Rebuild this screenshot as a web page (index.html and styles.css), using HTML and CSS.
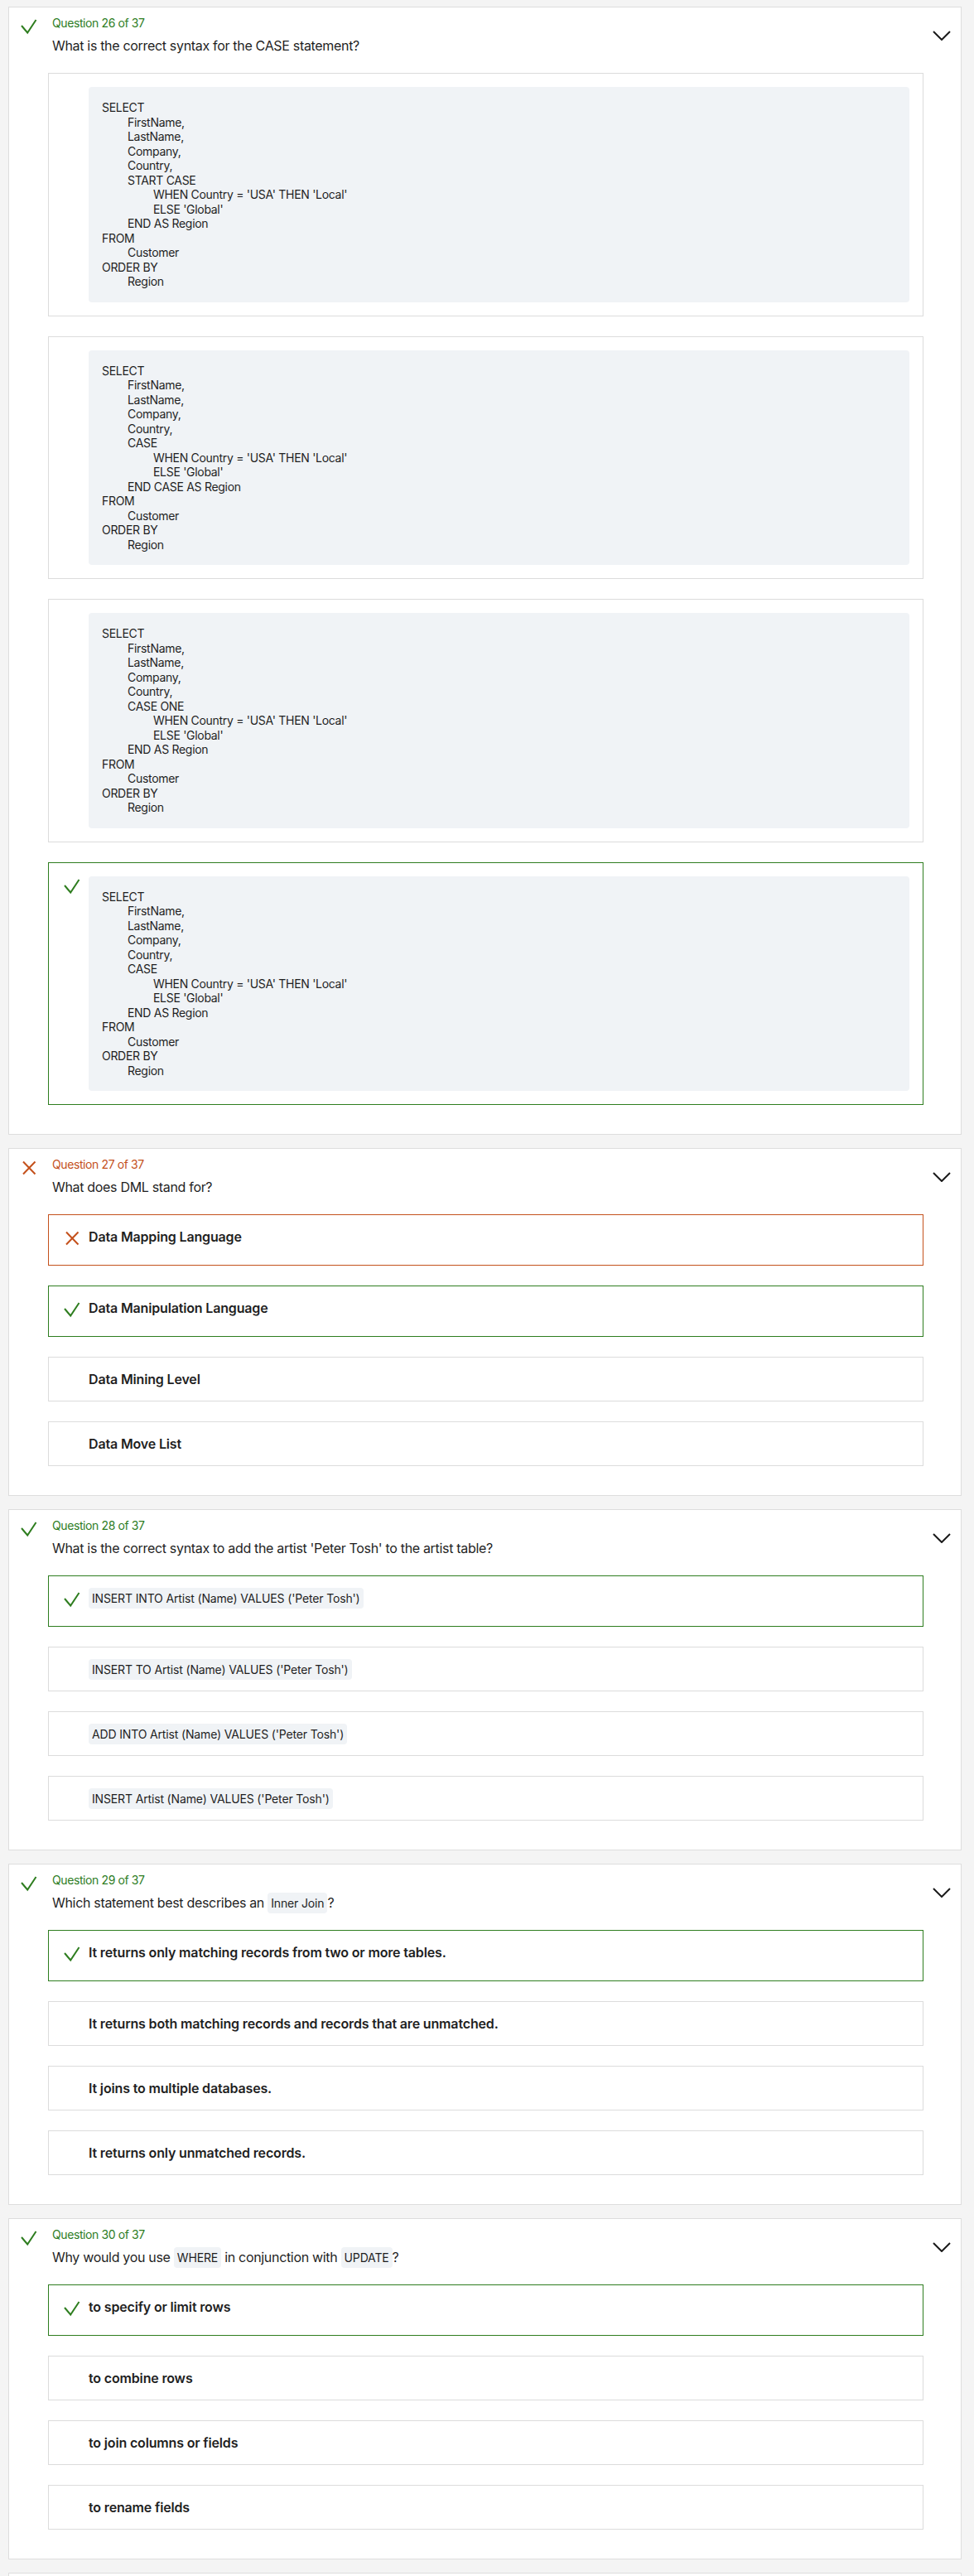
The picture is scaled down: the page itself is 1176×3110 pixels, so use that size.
FILE: index.html
```html
<!DOCTYPE html>
<html lang="en">
<head>
<meta charset="utf-8">
<title>Quiz review</title>
<link rel="stylesheet" href="styles.css">
</head>
<body>
<main class="page">

  <section class="card">
    <header class="card-head">
      <span class="status ok"><svg viewBox="0 0 24 24" width="24" height="24"><path d="M3 11 L10.2 19.5 L20.5 4" /></svg></span>
      <div class="head-text">
        <div class="label ok-text">Question 26 of 37</div>
        <div class="question">What is the correct syntax for the CASE statement?</div>
      </div>
      <span class="chev"><svg viewBox="0 0 22 12" width="22" height="12"><path d="M1 1 L11 11 L21 1" /></svg></span>
    </header>
    <div class="options">
      <div class="opt">
        <span class="opt-icon"></span>
<pre class="code">SELECT
	FirstName,
	LastName,
	Company,
	Country,
	START CASE
		WHEN Country = 'USA' THEN 'Local'
		ELSE 'Global'
	END AS Region
FROM
	Customer
ORDER BY
	Region</pre>
      </div>
      <div class="opt">
        <span class="opt-icon"></span>
<pre class="code">SELECT
	FirstName,
	LastName,
	Company,
	Country,
	CASE
		WHEN Country = 'USA' THEN 'Local'
		ELSE 'Global'
	END CASE AS Region
FROM
	Customer
ORDER BY
	Region</pre>
      </div>
      <div class="opt">
        <span class="opt-icon"></span>
<pre class="code">SELECT
	FirstName,
	LastName,
	Company,
	Country,
	CASE ONE
		WHEN Country = 'USA' THEN 'Local'
		ELSE 'Global'
	END AS Region
FROM
	Customer
ORDER BY
	Region</pre>
      </div>
      <div class="opt correct">
        <span class="opt-icon has-icon ok"><svg viewBox="0 0 24 24" width="24" height="24"><path d="M3 11 L10.2 19.5 L20.5 4" /></svg></span>
<pre class="code">SELECT
	FirstName,
	LastName,
	Company,
	Country,
	CASE
		WHEN Country = 'USA' THEN 'Local'
		ELSE 'Global'
	END AS Region
FROM
	Customer
ORDER BY
	Region</pre>
      </div>
    </div>
  </section>

  <section class="card">
    <header class="card-head">
      <span class="status bad"><svg viewBox="0 0 24 24" width="24" height="24"><path d="M5 4.5 L19.5 19.5 M19.5 4.5 L5 19.5" /></svg></span>
      <div class="head-text">
        <div class="label bad-text">Question 27 of 37</div>
        <div class="question">What does DML stand for?</div>
      </div>
      <span class="chev"><svg viewBox="0 0 22 12" width="22" height="12"><path d="M1 1 L11 11 L21 1" /></svg></span>
    </header>
    <div class="options">
      <div class="opt wrong">
        <span class="opt-icon has-icon bad"><svg viewBox="0 0 24 24" width="24" height="24"><path d="M5 4.5 L19.5 19.5 M19.5 4.5 L5 19.5" /></svg></span>
        <span class="opt-text">Data Mapping Language</span>
      </div>
      <div class="opt correct">
        <span class="opt-icon has-icon ok"><svg viewBox="0 0 24 24" width="24" height="24"><path d="M3 11 L10.2 19.5 L20.5 4" /></svg></span>
        <span class="opt-text">Data Manipulation Language</span>
      </div>
      <div class="opt">
        <span class="opt-icon"></span>
        <span class="opt-text">Data Mining Level</span>
      </div>
      <div class="opt">
        <span class="opt-icon"></span>
        <span class="opt-text">Data Move List</span>
      </div>
    </div>
  </section>

  <section class="card">
    <header class="card-head">
      <span class="status ok"><svg viewBox="0 0 24 24" width="24" height="24"><path d="M3 11 L10.2 19.5 L20.5 4" /></svg></span>
      <div class="head-text">
        <div class="label ok-text">Question 28 of 37</div>
        <div class="question">What is the correct syntax to add the artist 'Peter Tosh' to the artist table?</div>
      </div>
      <span class="chev"><svg viewBox="0 0 22 12" width="22" height="12"><path d="M1 1 L11 11 L21 1" /></svg></span>
    </header>
    <div class="options">
      <div class="opt correct">
        <span class="opt-icon has-icon ok"><svg viewBox="0 0 24 24" width="24" height="24"><path d="M3 11 L10.2 19.5 L20.5 4" /></svg></span>
        <span class="opt-text plain"><code class="inline">INSERT INTO Artist (Name) VALUES ('Peter Tosh')</code></span>
      </div>
      <div class="opt">
        <span class="opt-icon"></span>
        <span class="opt-text plain"><code class="inline">INSERT TO Artist (Name) VALUES ('Peter Tosh')</code></span>
      </div>
      <div class="opt">
        <span class="opt-icon"></span>
        <span class="opt-text plain"><code class="inline">ADD INTO Artist (Name) VALUES ('Peter Tosh')</code></span>
      </div>
      <div class="opt">
        <span class="opt-icon"></span>
        <span class="opt-text plain"><code class="inline">INSERT Artist (Name) VALUES ('Peter Tosh')</code></span>
      </div>
    </div>
  </section>

  <section class="card">
    <header class="card-head">
      <span class="status ok"><svg viewBox="0 0 24 24" width="24" height="24"><path d="M3 11 L10.2 19.5 L20.5 4" /></svg></span>
      <div class="head-text">
        <div class="label ok-text">Question 29 of 37</div>
        <div class="question">Which statement best describes an <code class="inline">Inner Join</code>?</div>
      </div>
      <span class="chev"><svg viewBox="0 0 22 12" width="22" height="12"><path d="M1 1 L11 11 L21 1" /></svg></span>
    </header>
    <div class="options">
      <div class="opt correct">
        <span class="opt-icon has-icon ok"><svg viewBox="0 0 24 24" width="24" height="24"><path d="M3 11 L10.2 19.5 L20.5 4" /></svg></span>
        <span class="opt-text">It returns only matching records from two or more tables.</span>
      </div>
      <div class="opt">
        <span class="opt-icon"></span>
        <span class="opt-text">It returns both matching records and records that are unmatched.</span>
      </div>
      <div class="opt">
        <span class="opt-icon"></span>
        <span class="opt-text">It joins to multiple databases.</span>
      </div>
      <div class="opt">
        <span class="opt-icon"></span>
        <span class="opt-text">It returns only unmatched records.</span>
      </div>
    </div>
  </section>

  <section class="card">
    <header class="card-head">
      <span class="status ok"><svg viewBox="0 0 24 24" width="24" height="24"><path d="M3 11 L10.2 19.5 L20.5 4" /></svg></span>
      <div class="head-text">
        <div class="label ok-text">Question 30 of 37</div>
        <div class="question">Why would you use <code class="inline">WHERE</code> in conjunction with <code class="inline">UPDATE</code>?</div>
      </div>
      <span class="chev"><svg viewBox="0 0 22 12" width="22" height="12"><path d="M1 1 L11 11 L21 1" /></svg></span>
    </header>
    <div class="options">
      <div class="opt correct">
        <span class="opt-icon has-icon ok"><svg viewBox="0 0 24 24" width="24" height="24"><path d="M3 11 L10.2 19.5 L20.5 4" /></svg></span>
        <span class="opt-text">to specify or limit rows</span>
      </div>
      <div class="opt">
        <span class="opt-icon"></span>
        <span class="opt-text">to combine rows</span>
      </div>
      <div class="opt">
        <span class="opt-icon"></span>
        <span class="opt-text">to join columns or fields</span>
      </div>
      <div class="opt">
        <span class="opt-icon"></span>
        <span class="opt-text">to rename fields</span>
      </div>
    </div>
  </section>

  <section class="card card-next"></section>

</main>
</body>
</html>
```

FILE: styles.css
```css
* { box-sizing: border-box; }

html, body {
  margin: 0;
  padding: 0;
  background: #f4f4f4;
}

body {
  font-family: Inter, "Liberation Sans", Arial, sans-serif;
  color: #1f1f1f;
}

.page {
  padding: 8px 15px 0 10px;
}

.card {
  background: #ffffff;
  border: 1px solid #dddddd;
  margin-bottom: 16px;
  padding: 9px 12px 35px 12px;
}

.card-next {
  min-height: 200px;
}

.card-head {
  display: flex;
  align-items: center;
}

.status {
  align-self: flex-start;
  flex: none;
  width: 24px;
  height: 24px;
  margin-top: 2px;
  margin-right: 16px;
}

.status svg,
.opt-icon svg {
  display: block;
  fill: none;
  stroke-width: 2;
}

.ok svg { stroke: #2e7d1f; }
.bad svg { stroke: #c4511c; }

.head-text {
  flex: 1;
  min-width: 0;
}

.label {
  font-size: 14px;
  line-height: 20px;
  letter-spacing: -0.4px;
}

.ok-text { color: #2e7d1f; }
.bad-text { color: #c4511c; }

.question {
  margin-top: 5px;
  font-size: 16px;
  line-height: 24px;
  letter-spacing: -0.32px;
  color: #1f1f1f;
}

.chev {
  flex: none;
  width: 22px;
  height: 12px;
  margin-left: 12px;
}

.chev svg {
  display: block;
  fill: none;
  stroke: #1a1a1a;
  stroke-width: 2;
}

.options {
  margin: 21px 33px 0 35px;
  display: flex;
  flex-direction: column;
  gap: 24px;
}

.opt {
  display: flex;
  align-items: flex-start;
  border: 1px solid #dcdcdc;
  padding: 16px;
  background: #ffffff;
}

.opt.correct { border-color: #2e7d1f; }
.opt.wrong { border-color: #c4511c; }

.opt-icon {
  flex: none;
  width: 24px;
  margin-right: 8px;
}

.opt-icon.has-icon {
  height: 28px;
}

.opt-text {
  font-size: 16px;
  line-height: 20px;
  font-weight: 600;
  letter-spacing: -0.16px;
  color: #1f1f1f;
}

.opt-text.plain {
  font-weight: 400;
  letter-spacing: 0;
}

.code {
  flex: 1;
  margin: 0;
  padding: 16px;
  background: #f0f3f6;
  border-radius: 4px;
  font-family: Inter, "Liberation Sans", Arial, sans-serif;
  font-size: 14px;
  line-height: 17.5px;
  letter-spacing: -0.3px;
  color: #1f1f1f;
  tab-size: 31px;
  white-space: pre;
}

.inline {
  font-family: Inter, "Liberation Sans", Arial, sans-serif;
  font-size: 14px;
  font-weight: 400;
  line-height: 17px;
  letter-spacing: -0.15px;
  background: #f0f3f6;
  border-radius: 4px;
  padding: 4px 4px;
  color: #1f1f1f;
}
```
